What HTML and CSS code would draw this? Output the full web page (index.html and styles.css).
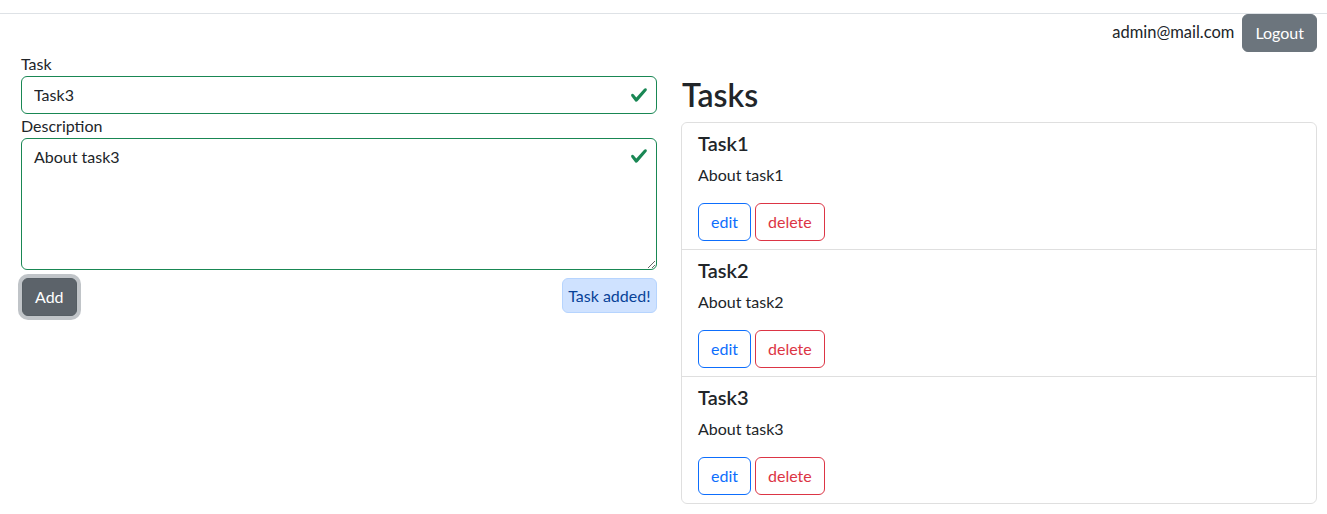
FILE: index.html
```html
<!DOCTYPE html>
<html lang="en">
<head>
<meta charset="utf-8">
<title>Tasks</title>
<link rel="stylesheet" href="styles.css">
</head>
<body>
<div class="topbar"></div>
<header class="userbar">
  <span class="user">admin@mail.com</span>
  <button class="btn btn-secondary">Logout</button>
</header>
<main class="layout">
  <section class="form-col">
    <label class="form-label" for="task">Task</label>
    <div class="field">
      <input id="task" class="form-control is-valid" type="text" value="Task3">
      <svg class="valid-icon" viewBox="0 0 8 8" width="18" height="18"><path fill="#198754" d="M2.3 6.73.6 4.53c-.4-1.040.46-1.4 1.1-.8l1.1 1.4 3.4-3.8c.6-.63 1.6-.27 1.2.7l-4 4.6c-.43.5-.8.4-1.1.1z"/></svg>
    </div>
    <label class="form-label" for="desc">Description</label>
    <div class="field field-area">
      <textarea id="desc" class="form-control is-valid textarea">About task3</textarea>
      <svg class="valid-icon" viewBox="0 0 8 8" width="18" height="18"><path fill="#198754" d="M2.3 6.73.6 4.53c-.4-1.040.46-1.4 1.1-.8l1.1 1.4 3.4-3.8c.6-.63 1.6-.27 1.2.7l-4 4.6c-.43.5-.8.4-1.1.1z"/></svg>
    </div>
    <div class="form-actions">
      <button class="btn btn-secondary focused">Add</button>
      <div class="alert">Task added!</div>
    </div>
  </section>
  <section class="list-col">
    <h2 class="title">Tasks</h2>
    <ul class="task-list">
      <li class="task-item">
        <h5 class="task-title">Task1</h5>
        <p class="task-desc">About task1</p>
        <div class="task-buttons">
          <button class="btn btn-outline-primary">edit</button>
          <button class="btn btn-outline-danger">delete</button>
        </div>
      </li>
      <li class="task-item">
        <h5 class="task-title">Task2</h5>
        <p class="task-desc">About task2</p>
        <div class="task-buttons">
          <button class="btn btn-outline-primary">edit</button>
          <button class="btn btn-outline-danger">delete</button>
        </div>
      </li>
      <li class="task-item">
        <h5 class="task-title">Task3</h5>
        <p class="task-desc">About task3</p>
        <div class="task-buttons">
          <button class="btn btn-outline-primary">edit</button>
          <button class="btn btn-outline-danger">delete</button>
        </div>
      </li>
    </ul>
  </section>
</main>
</body>
</html>
```
FILE: styles.css
```css
* { box-sizing: border-box; }
html, body {
  margin: 0;
  background: #fff;
}
body {
  font-family: "Lato", "Noto Sans", sans-serif;
  font-size: 16px;
  line-height: 24px;
  color: #212529;
}
.topbar {
  height: 14px;
  border-bottom: 1px solid #dee2e6;
}
.userbar {
  display: flex;
  justify-content: flex-end;
  align-items: center;
  gap: 8px;
  padding: 0 10px 0 0;
}
.user {
  font-size: 16.5px;
  padding-bottom: 2px;
}
.btn {
  display: inline-block;
  font-family: inherit;
  font-size: 16px;
  line-height: 24px;
  padding: 6px 12px;
  border: 1px solid transparent;
  border-radius: 6px;
  background: transparent;
  cursor: pointer;
}
.btn-secondary {
  background: #6c757d;
  border-color: #6c757d;
  color: #fff;
}
.btn-secondary.focused {
  background: #5c636a;
  border-color: #565e64;
  box-shadow: 0 0 0 4px rgba(130, 138, 145, 0.5);
}
.btn-outline-primary {
  color: #0d6efd;
  border-color: #0d6efd;
}
.btn-outline-danger {
  color: #dc3545;
  border-color: #dc3545;
}
.layout {
  display: grid;
  grid-template-columns: 1fr 1fr;
  column-gap: 24px;
  padding: 0 10px 0 21px;
}
.form-col {
  display: flex;
  flex-direction: column;
}
.form-label {
  display: block;
  line-height: 24px;
}
.field {
  position: relative;
}
.form-control {
  display: block;
  width: 100%;
  font-family: inherit;
  font-size: 16px;
  line-height: 24px;
  color: #212529;
  padding: 6px 36px 6px 12px;
  border: 1px solid #198754;
  border-radius: 6px;
  background: #fff;
  outline: none;
  margin: 0;
}
.textarea {
  height: 132px;
  resize: vertical;
}
.valid-icon {
  position: absolute;
  right: 9px;
  top: 10px;
}
.field-area .valid-icon { top: 9px; }
.form-actions {
  display: flex;
  justify-content: space-between;
  align-items: flex-start;
  margin-top: 8px;
}
.form-actions .btn { margin-left: 1px; }
.alert {
  padding: 4px 5.5px;
  background: #cfe2ff;
  border: 1px solid #b6d4fe;
  color: #084298;
  border-radius: 6px;
  line-height: 25px;
}
.title {
  margin: 24px 0 8px;
  padding-left: 1px;
  font-size: 32px;
  line-height: 38px;
  font-weight: 600;
}
.task-list {
  list-style: none;
  margin: 0;
  padding: 0;
  border: 1px solid rgba(0, 0, 0, 0.125);
  border-radius: 6px;
}
.task-item {
  padding: 8px 16px;
}
.task-item + .task-item {
  border-top: 1px solid rgba(0, 0, 0, 0.125);
}
.task-title {
  margin: 0 0 8px;
  font-size: 20px;
  line-height: 24px;
  font-weight: 600;
}
.task-desc {
  margin: 0 0 16px;
}
.task-buttons {
  display: flex;
  gap: 4px;
}
```
